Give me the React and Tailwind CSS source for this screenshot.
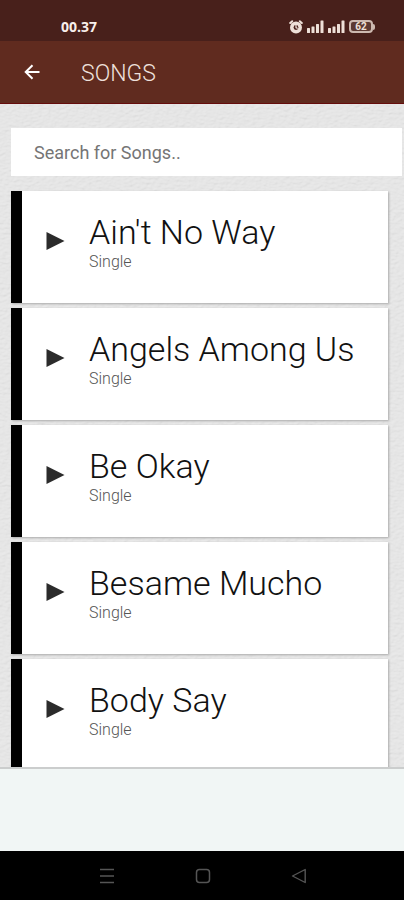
const songs = [
    { title: "Ain't No Way", type: 'Single' },
    { title: 'Angels Among Us', type: 'Single' },
    { title: 'Be Okay', type: 'Single' },
    { title: 'Besame Mucho', type: 'Single' },
    { title: 'Body Say', type: 'Single' },
];

function SignalIcon() {
    return (
        <svg width="17" height="13" viewBox="0 0 17 13" fill="currentColor" aria-hidden="true">
            <rect x="0" y="8" width="3" height="5" rx="0.5" />
            <rect x="4.5" y="6.5" width="3" height="6.5" rx="0.5" />
            <rect x="9" y="4" width="3" height="9" rx="0.5" />
            <rect x="13.5" y="0.5" width="3" height="12.5" rx="0.5" />
        </svg>
    );
}

function StatusBar() {
    return (
        <div className="flex h-[41px] shrink-0 items-center justify-between bg-[#48201b] pt-3 pr-[29px] pl-[61px] text-[#eee0d8]">
            <span className="font-['Open_Sans',sans-serif] text-[14px] leading-4 font-bold text-[#f8efeb]">00.37</span>
            <div className="flex items-center gap-1">
                <svg width="14" height="14" viewBox="0 0 14 14" aria-hidden="true">
                    <circle cx="7" cy="7.5" r="6" fill="currentColor" />
                    <path d="M1.2 3 3.2 1.2M12.8 3 10.8 1.2" stroke="currentColor" strokeWidth="2" strokeLinecap="round" />
                    <circle cx="7" cy="7.5" r="2.4" fill="#48201b" />
                    <path d="M7 5v2.6l1.6 1" fill="none" stroke="currentColor" strokeWidth="1.2" />
                </svg>
                <SignalIcon />
                <SignalIcon />
                <div className="flex items-center">
                    <div className="flex h-[13px] w-6 items-center justify-center rounded border-2 border-[#cdb9b0] bg-[#5c3932] font-['Roboto',sans-serif] text-[10px] leading-none font-bold">
                        62
                    </div>
                    <div className="h-[6px] w-[2px] rounded-r bg-[#cdb9b0]" />
                </div>
            </div>
        </div>
    );
}

function Header() {
    return (
        <header className="flex h-[63px] shrink-0 items-center border-b border-[#650d0c] bg-[#602b1f] pt-1 pl-6 text-[#eee0dc]">
            <button type="button" aria-label="Back" className="pb-1 text-white">
                <svg width="16" height="16" viewBox="0 0 16 16" fill="none" stroke="currentColor" strokeWidth="2">
                    <path d="M15.5 8H2" />
                    <path d="M8.5 1.2 1.7 8l6.8 6.8" />
                </svg>
            </button>
            <h1 className="pl-[41px] text-[23px] leading-7 font-light">SONGS</h1>
        </header>
    );
}

// grainy paper behind the list
function PaperTexture() {
    return (
        <svg className="absolute inset-0 h-full w-full" aria-hidden="true">
            <filter id="paper" x="0" y="0" width="100%" height="100%">
                <feTurbulence type="fractalNoise" baseFrequency="0.22 0.4" numOctaves="3" seed="4" result="noise" />
                <feDiffuseLighting in="noise" surfaceScale="0.5" diffuseConstant="1.01" lightingColor="#e8e8e8">
                    <feDistantLight azimuth="60" elevation="75" />
                </feDiffuseLighting>
            </filter>
            <rect width="100%" height="100%" filter="url(#paper)" />
        </svg>
    );
}

function SongCard({ title, type }) {
    return (
        <li className="flex h-28 border-l-[11px] border-black bg-white shadow-[1px_1px_2px_#aaaaaa]">
            <button type="button" className="flex w-full items-start pt-[21px] pl-6 text-left">
                <svg className="mt-5" width="19" height="18" viewBox="0 0 19 18" fill="#2b2b2b" aria-hidden="true">
                    <path d="M0.5 0 18.5 9 0.5 18z" />
                </svg>
                <span className="flex flex-col pl-6">
                    <span className="text-[34px] leading-[41px] font-light text-[#111111]">{title}</span>
                    <span className="text-[16px] leading-[18px] font-light text-[#555555]">{type}</span>
                </span>
            </button>
        </li>
    );
}

function NavBar() {
    return (
        <nav className="flex h-[49px] shrink-0 items-center justify-center gap-20 bg-black pl-[2px] text-[#555555]">
            <button type="button" aria-label="Recent apps">
                <svg width="16" height="16" viewBox="0 0 16 16" fill="none" stroke="currentColor" strokeWidth="1.3">
                    <path d="M1 1.5h14M1 8h14M1 14.5h14" />
                </svg>
            </button>
            <button type="button" aria-label="Home">
                <svg width="16" height="16" viewBox="0 0 16 16" fill="none" stroke="currentColor" strokeWidth="1.5">
                    <rect x="1.5" y="1.5" width="13" height="13" rx="3" />
                </svg>
            </button>
            <button type="button" aria-label="Back">
                <svg width="16" height="16" viewBox="0 0 16 16" fill="none" stroke="currentColor" strokeWidth="1.4" strokeLinejoin="round">
                    <path d="M14.2 1.5v13L1.5 8z" />
                </svg>
            </button>
        </nav>
    );
}

export default function App() {
    return (
        <div className="flex h-screen flex-col overflow-hidden bg-white font-['Roboto',sans-serif]">
            <StatusBar />
            <Header />
            <main className="relative min-h-0 flex-1 overflow-hidden bg-[#e5e5e5]">
                <PaperTexture />
                <div className="relative pt-6 pl-[11px]">
                    <div className="pr-[2px]">
                        <input
                            type="text"
                            aria-label="Search for Songs"
                            placeholder="Search for Songs.."
                            className="h-12 w-full bg-white px-[23px] text-[18px] text-[#333333] outline-none placeholder:text-[#757575]"
                        />
                    </div>
                    <ul className="flex flex-col gap-[5px] pt-[15px] pr-4">
                        {songs.map((song) => (
                            <SongCard key={song.title} title={song.title} type={song.type} />
                        ))}
                    </ul>
                </div>
            </main>
            <div className="h-[84px] shrink-0 border-t-2 border-[#cbcdcd] bg-[#f1f6f5]" />
            <NavBar />
        </div>
    );
}
